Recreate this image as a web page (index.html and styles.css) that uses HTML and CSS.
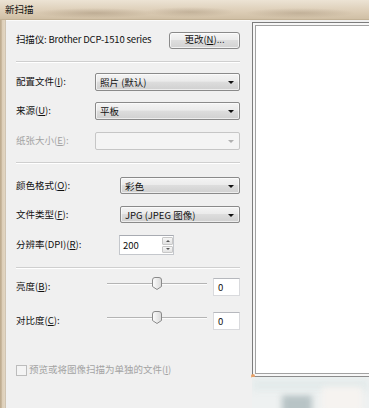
FILE: index.html
```html
<!DOCTYPE html>
<html lang="zh-CN">
<head>
<meta charset="utf-8">
<title>新扫描</title>
<link rel="stylesheet" href="styles.css">
</head>
<body>
<div class="window">
  <div class="titlebar"><span class="title">新扫描</span></div>
  <div class="main">
    <div class="frame-left"></div>
    <div class="panel">
      <div class="row r-scanner">
        <span class="label scanner">扫描仪: Brother DCP-1510 series</span>
        <button class="btn">更改(<u>N</u>)...</button>
      </div>
      <div class="sep s1"></div>
      <div class="row r-profile">
        <span class="label">配置文件(<u>I</u>):</span>
        <div class="combo wide"><span>照片 (默认)</span><i class="arrow"></i></div>
      </div>
      <div class="row r-source">
        <span class="label">来源(<u>U</u>):</span>
        <div class="combo wide"><span>平板</span><i class="arrow"></i></div>
      </div>
      <div class="row r-paper">
        <span class="label disabled">纸张大小(<u>E</u>):</span>
        <div class="combo wide off"><span></span><i class="arrow"></i></div>
      </div>
      <div class="sep s2"></div>
      <div class="row r-color">
        <span class="label">颜色格式(<u>O</u>):</span>
        <div class="combo narrow"><span>彩色</span><i class="arrow"></i></div>
      </div>
      <div class="row r-type">
        <span class="label">文件类型(<u>F</u>):</span>
        <div class="combo narrow"><span>JPG (JPEG 图像)</span><i class="arrow"></i></div>
      </div>
      <div class="row r-dpi">
        <span class="label">分辨率(DPI)(<u>R</u>):</span>
        <div class="spin">
          <span class="spin-val">200</span>
          <div class="spin-btns">
            <div class="spin-btn"><i class="tri up"></i></div>
            <div class="spin-btn"><i class="tri down"></i></div>
          </div>
        </div>
      </div>
      <div class="sep s3"></div>
      <div class="row r-bright">
        <span class="label">亮度(<u>B</u>):</span>
        <div class="slider">
          <div class="track"></div>
          <svg class="thumb" width="10" height="13" viewBox="0 0 10 13"><defs><linearGradient id="tg" x1="0" x2="1" y1="0" y2="0"><stop offset="0" stop-color="#fdfdfd"/><stop offset="1" stop-color="#d9d9d9"/></linearGradient></defs><path d="M0.5 3 Q0.5 0.5 3 0.5 H7 Q9.5 0.5 9.5 3 V9.5 L5 12.5 L0.5 9.5 Z" fill="url(#tg)" stroke="#8a8a8a"/></svg>
        </div>
        <div class="valbox">0</div>
      </div>
      <div class="row r-contrast">
        <span class="label">对比度(<u>C</u>):</span>
        <div class="slider">
          <div class="track"></div>
          <svg class="thumb" width="10" height="13" viewBox="0 0 10 13"><path d="M0.5 3 Q0.5 0.5 3 0.5 H7 Q9.5 0.5 9.5 3 V9.5 L5 12.5 L0.5 9.5 Z" fill="url(#tg)" stroke="#8a8a8a"/></svg>
        </div>
        <div class="valbox">0</div>
      </div>
      <div class="row r-check">
        <span class="check"></span>
        <span class="label disabled">预览或将图像扫描为单独的文件(<u>I</u>)</span>
      </div>
    </div>
    <div class="right">
      <div class="preview"><div class="preview-inner"></div><span class="dot"></span></div>
      <div class="below">
        <div class="blur b1"></div>
        <div class="blur b2"></div>
        <div class="blur b3"></div>
      </div>
    </div>
  </div>
</div>
</body>
</html>
```
FILE: styles.css
```css
* { box-sizing: border-box; }
html, body { margin: 0; padding: 0; }
body {
  width: 369px;
  height: 408px;
  overflow: hidden;
  font-family: "Noto Sans CJK SC", "Noto Sans", sans-serif;
  font-size: 9.5px;
  color: #111;
  background: #d7c7ae;
}
.window { width: 369px; height: 408px; display: flex; flex-direction: column; }
.titlebar {
  height: 20px;
  flex: none;
  display: flex;
  align-items: center;
  padding-left: 5px;
  background:
    radial-gradient(ellipse 60px 5px at 95px 13px, rgba(150,130,105,0.4), transparent),
    radial-gradient(ellipse 45px 5px at 190px 12px, rgba(150,130,105,0.35), transparent),
    radial-gradient(ellipse 55px 5px at 300px 13px, rgba(150,130,105,0.35), transparent),
    linear-gradient(#ece3d4, #dccdb6 60%, #d0bfa5);
  border-bottom: 1px solid #c2b195;
}
.title { font-size: 9.5px; color: #111; line-height: 1; }
.main { flex: 1; display: flex; min-height: 0; }
.frame-left {
  width: 6px;
  flex: none;
  background: linear-gradient(90deg, #c9b79b 0, #b5a286 1px, #dccdb6 2px, #e2d6c3 5px, #bfb3a2 6px);
}
.panel {
  width: 244px;
  flex: none;
  background: #f0f0f0;
  border-top: 1px solid #fbfbfb;
  padding: 0 10px 0 10px;
  display: flex;
  flex-direction: column;
}
.row { display: flex; align-items: center; flex: none; }
.label { white-space: nowrap; line-height: 1; }
.label.disabled { color: #a3a3a3; }
u { text-decoration: underline; text-underline-offset: 1px; }
.r-scanner { height: 18px; margin-top: 10px; justify-content: space-between; }
.scanner { letter-spacing: -0.15px; }
.btn {
  width: 71px;
  height: 17px;
  padding: 0;
  margin: 0;
  font-family: inherit;
  font-size: 9.5px;
  color: #111;
  border: 1px solid #8a8a8a;
  border-radius: 3px;
  background: linear-gradient(#f5f5f5, #ececec 45%, #dedede 50%, #d2d2d2);
  box-shadow: inset 0 0 0 1px rgba(255,255,255,0.7);
  line-height: 1;
}
.sep { height: 2px; flex: none; border-top: 1px solid #cfcfcf; border-bottom: 1px solid #ffffff; }
.s1 { margin-top: 12px; }
.s2 { margin-top: 12px; }
.s3 { margin-top: 12px; }
.r-profile { height: 18px; margin-top: 10px; justify-content: space-between; }
.r-source { height: 18px; margin-top: 11px; justify-content: space-between; }
.r-paper { height: 18px; margin-top: 12px; justify-content: space-between; }
.r-color { height: 17px; margin-top: 13px; justify-content: space-between; }
.r-type { height: 17px; margin-top: 12px; justify-content: space-between; }
.r-dpi { height: 20px; margin-top: 12px; }
.r-bright { height: 18px; margin-top: 9px; align-items: flex-start; }
.r-contrast { height: 18px; margin-top: 16px; align-items: flex-start; }
.r-bright .label, .r-contrast .label { align-self: center; }
.r-check { height: 12px; margin-top: 34px; }
.combo {
  height: 100%;
  display: flex;
  align-items: center;
  justify-content: space-between;
  padding: 0 5px 0 4px;
  border: 1px solid #8a8a8a;
  border-radius: 2px;
  background: linear-gradient(#f4f4f4, #ebebeb 45%, #dddddd 50%, #d0d0d0);
  box-shadow: inset 0 0 0 1px rgba(255,255,255,0.6);
  white-space: nowrap;
}
.combo.wide { width: 145px; }
.combo.narrow { width: 120px; }
.combo.off { background: #f4f4f4; border-color: #c6c6c6; box-shadow: none; }
.arrow {
  width: 0; height: 0;
  border-left: 3px solid transparent;
  border-right: 3px solid transparent;
  border-top: 3px solid #111;
  margin-top: 1px;
}
.combo.off .arrow { border-top-color: #b0b0b0; }
.spin {
  margin-left: auto;
  margin-right: 66px;
  width: 55px;
  height: 20px;
  display: flex;
  background: #fff;
  border: 1px solid #c4c7cc;
  border-top-color: #a8abb2;
}
.spin-val { flex: 1; display: flex; align-items: center; padding-left: 3px; }
.spin-btns { width: 11px; display: flex; flex-direction: column; gap: 1px; padding: 1px 0; }
.spin-btn {
  flex: 1;
  display: flex;
  align-items: center;
  justify-content: center;
  background: linear-gradient(#f6f6f6, #e2e2e2);
  border: 1px solid #c8c8c8;
  border-radius: 1px;
}
.tri { width: 0; height: 0; border-left: 2px solid transparent; border-right: 2px solid transparent; }
.tri.up { border-bottom: 2px solid #555; }
.tri.down { border-top: 2px solid #555; }
.slider {
  position: relative;
  margin-left: auto;
  width: 100px;
  height: 14px;
}
.track {
  position: absolute;
  left: 0; right: 0; top: 5px;
  height: 2px;
  border-top: 1px solid #b4b4b4;
  border-bottom: 1px solid #fcfcfc;
}
.thumb { position: absolute; left: 45px; top: -1px; }
.valbox {
  margin-left: 6px;
  width: 27px;
  height: 18px;
  background: #fff;
  border: 1px solid #d9dadd;
  border-top-color: #b6b8bd;
  display: flex;
  align-items: center;
  padding-left: 4px;
}
.check {
  width: 11px; height: 11px;
  border: 1px solid #bcbcbc;
  background: #f4f4f4;
  margin-right: 2px;
  flex: none;
}
.right { flex: 1; display: flex; flex-direction: column; padding-left: 2px; background: #f0f0f0; }
.preview {
  position: relative;
  margin-top: 2px;
  height: 355px;
  flex: none;
  border-left: 1px solid #7c7c7c;
  border-top: 1px solid #7c7c7c;
  border-bottom: 1px solid #8c8c8c;
  padding: 2px 0 2px 2px;
  background: #f7f7f7;
}
.preview-inner { height: 100%; background: #fff; border-left: 1px solid #a2a2a2; border-top: 1px solid #a2a2a2; border-bottom: 1px solid #a2a2a2; }
.dot {
  position: absolute;
  left: -2px; bottom: -2px;
  width: 4px; height: 4px;
  border-radius: 50%;
  background: #e7a26a;
}
.below { flex: 1; position: relative; background: #eef1f1; overflow: hidden; }
.blur { position: absolute; filter: blur(3px); }
.b1 { left: 30px; top: 18px; width: 30px; height: 20px; background: #b8c4c6; }
.b2 { left: 0; top: 2px; width: 117px; height: 12px; background: #e4ebeb; }
.b3 { left: 70px; top: 10px; width: 40px; height: 25px; background: #f6f3f0; }
```
